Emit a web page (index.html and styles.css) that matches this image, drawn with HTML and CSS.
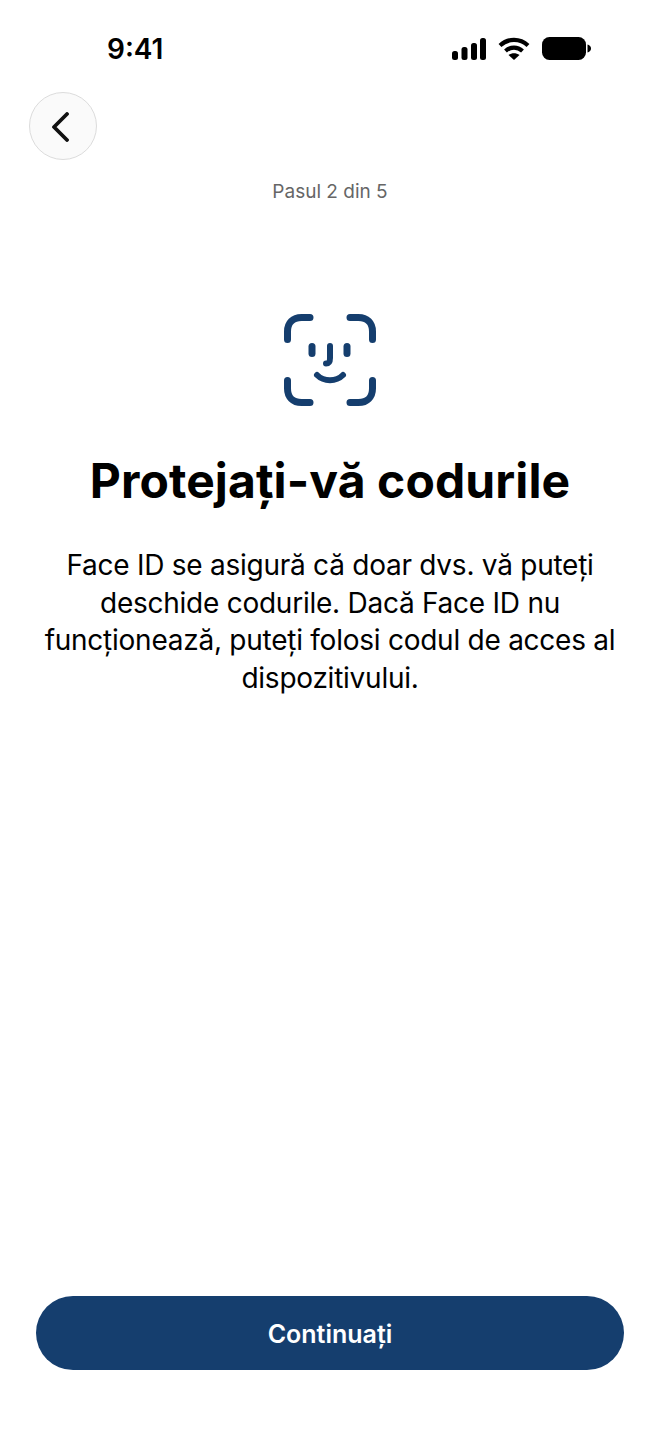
FILE: index.html
```html
<!DOCTYPE html>
<html lang="ro">
<head>
<meta charset="utf-8">
<title>Pasul 2 din 5</title>
<link rel="stylesheet" href="styles.css">
</head>
<body>
<main class="screen">
  <header class="status">
    <span class="time">9:41</span>
    <div class="status-icons">
      <svg width="34" height="22" viewBox="0 0 34 22"><g fill="#000"><rect x="0" y="13" width="6" height="9" rx="2.500"/><rect x="9.500" y="9" width="6" height="13" rx="2.500"/><rect x="19" y="5" width="6" height="17" rx="2.500"/><rect x="28" y="0" width="6" height="22" rx="2.500"/></g></svg>
      <svg width="32" height="23" viewBox="0 0 32 23"><g fill="none" stroke="#000" stroke-width="4.200"><path d="M2 8.500C10 1 22 1 30 8.500"/><path d="M7.500 14C12.500 9.500 19.500 9.500 24.500 14"/></g><path d="M10.500 18C14 15.500 18 15.500 21.500 18L16 23Z" fill="#000"/></svg>
      <svg width="49" height="23" viewBox="0 0 49 23"><rect x="0" y="0" width="44" height="23" rx="7.500" fill="#000"/><path d="M45.500 7.500C47.500 8 49 9.500 49 11.500C49 13.500 47.500 15 45.500 15.500Z" fill="#000"/></svg>
    </div>
  </header>
  <nav class="nav">
    <button class="back" aria-label="Înapoi">
      <svg width="18" height="30" viewBox="0 0 18 30"><path d="M16 2L3 15L16 28" fill="none" stroke="#111" stroke-width="3.800" stroke-linecap="round" stroke-linejoin="round"/></svg>
    </button>
    <p class="step">Pasul 2 din 5</p>
  </nav>
  <section class="content">
    <svg class="face" width="94" height="94" viewBox="0 0 94 94">
      <g fill="none" stroke="#153e6e" stroke-width="7" stroke-linecap="round" stroke-linejoin="round">
        <path d="M4.500 26.500V18.500C4.500 10 10 4.500 18.500 4.500H27"/>
        <path d="M67 4.500H75.500C84 4.500 89.500 10 89.500 18.500V26.500"/>
        <path d="M4.500 67.500V75.500C4.500 84 10 89.500 18.500 89.500H27"/>
        <path d="M67 89.500H75.500C84 89.500 89.500 84 89.500 75.500V67.500"/>
        <path d="M29 33.500V40.500"/>
        <path d="M64 33.500V40.500"/>
      </g>
      <g fill="none" stroke="#153e6e" stroke-width="6" stroke-linecap="round" stroke-linejoin="round">
        <path d="M47 33V45C47 49.500 46 50.500 43 50.500"/>
        <path d="M34 62C41 69 53 69 60 62"/>
      </g>
    </svg>
    <h1 class="title">Protejați-vă codurile</h1>
    <p class="text">Face ID se asigură că doar dvs. vă puteți deschide codurile. Dacă Face ID nu funcționează, puteți folosi codul de acces al dispozitivului.</p>
  </section>
  <footer class="footer">
    <button class="cta">Continuați</button>
  </footer>
</main>
</body>
</html>
```
FILE: styles.css
```css
* { box-sizing: border-box; }
html, body { margin: 0; padding: 0; background: #fff; }
body { font-family: Inter, "Liberation Sans", sans-serif; color: #000; }
.screen { width: 660px; height: 1434px; display: flex; flex-direction: column; overflow: hidden; }
.status { height: 92px; padding: 30px 69px 0 107px; display: flex; justify-content: space-between; align-items: flex-start; }
.time { font-size: 28px; font-weight: 600; line-height: 38px; }
.status-icons { display: flex; align-items: center; gap: 12px; padding-top: 7px; }
.nav { height: 118px; display: flex; flex-direction: column; padding: 0 0 0 29px; }
.back { width: 68px; height: 68px; border-radius: 50%; border: 1px solid #dcdcdc; background: #fafafa; display: flex; align-items: center; justify-content: center; padding: 1px 6px 0 0; flex: none; }
.step { margin: 20px 0 0 -29px; text-align: center; font-size: 19px; line-height: 24px; color: #666; }
.content { flex: 1; display: flex; flex-direction: column; align-items: center; padding: 103px 40px 0; }
.face { flex: none; }
.title { margin: 46px 0 0; font-size: 48px; line-height: 56px; font-weight: 700; letter-spacing: 0.1px; white-space: nowrap; }
.text { margin: 38px -4px 0; font-size: 28px; line-height: 37.500px; letter-spacing: -0.25px; text-align: center; }
.footer { padding: 0 36px 64px; }
.cta { width: 100%; height: 74px; border: 0; border-radius: 38px; background: #153e6e; color: #fff; padding: 2px 0 0; font: 600 25px/30px Inter, "Liberation Sans", sans-serif; }
```
